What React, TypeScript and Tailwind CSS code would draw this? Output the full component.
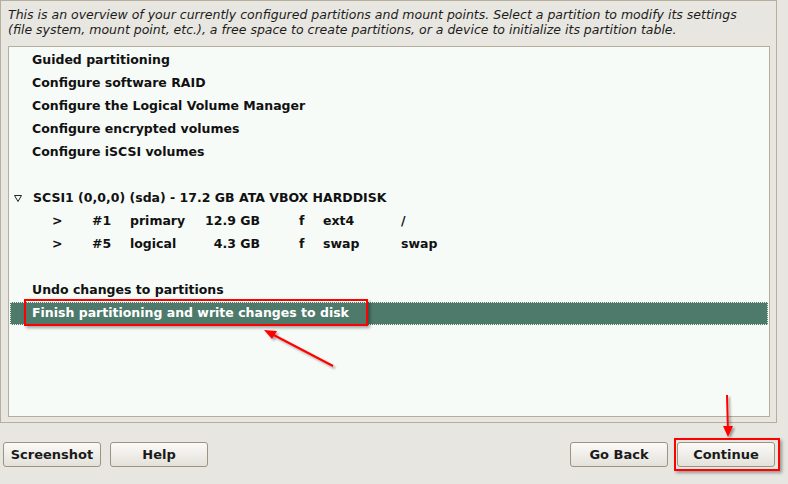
import React from 'react';

// Debian installer style partition overview
const items = [
  'Guided partitioning',
  'Configure software RAID',
  'Configure the Logical Volume Manager',
  'Configure encrypted volumes',
  'Configure iSCSI volumes',
];

const parts = [
  { num: '#1', type: 'primary', size: '12.9 GB', fs: 'ext4', mount: '/' },
  { num: '#5', type: 'logical', size: '4.3 GB', fs: 'swap', mount: 'swap' },
];

function Row({ children, className = '' }: { children: React.ReactNode; className?: string }) {
  return <div className={`h-[23px] flex items-center whitespace-pre ${className}`}>{children}</div>;
}

function Btn({ label, className = '' }: { label: string; className?: string }) {
  return (
    <button
      className={`h-[25px] w-[98px] rounded-[3px] border border-[#9d9381] bg-gradient-to-b from-[#fbfaf8] to-[#e4e1da] text-[13px] font-bold text-[#1a1a1a] ${className}`}
    >
      {label}
    </button>
  );
}

export default function App() {
  return (
    <div
      className="relative w-[788px] h-[484px] overflow-hidden bg-[#e8e6e0] text-[#111]"
      style={{ fontFamily: '"DejaVu Sans", sans-serif' }}
    >
      <div className="w-[777px] h-[423px] border border-[#b7ad9b] flex flex-col">
        <p className="px-[7px] pt-[6px] text-[12.5px] leading-[15px] italic text-[#1c1c1c] whitespace-nowrap">
          This is an overview of your currently configured partitions and mount points. Select a partition to modify its settings
          <br />
          (file system, mount point, etc.), a free space to create partitions, or a device to initialize its partition table.
        </p>
        <div className="ml-[7px] mt-[9px] w-[762px] h-[371px] border border-[#b7ad9b] bg-[#f6fbf8] px-px pt-[2px] text-[12.5px] font-bold">
          {items.map((t) => (
            <Row key={t} className="pl-[22px]">{t}</Row>
          ))}
          <Row>{' '}</Row>
          <Row className="pl-[4px]">
            <svg width="8" height="7" viewBox="0 0 8 7" className="mr-[11px]">
              <path d="M0.5 0.5 L7.5 0.5 L4 6.5 Z" fill="none" stroke="#222" strokeWidth="1" />
            </svg>
            SCSI1 (0,0,0) (sda) - 17.2 GB ATA VBOX HARDDISK
          </Row>
          {parts.map((p) => (
            <Row key={p.num} className="pl-[42px]">
              <span className="w-[40px]">&gt;</span>
              <span className="w-[38px]">{p.num}</span>
              <span className="w-[69px]">{p.type}</span>
              <span className="w-[61px] text-right">{p.size}</span>
              <span className="w-[39px]"></span>
              <span className="w-[24px]">f</span>
              <span className="w-[78px]">{p.fs}</span>
              <span>{p.mount}</span>
            </Row>
          ))}
          <Row>{' '}</Row>
          <Row className="pl-[22px]">Undo changes to partitions</Row>
          <Row className="relative pl-[22px] bg-[#4e7a6c] text-white outline-1 outline-dotted outline-offset-[-1px] outline-[#e8f0ec]">
            Finish partitioning and write changes to disk
            <span className="absolute left-[14px] top-[-3px] w-[344px] h-[27px] border-2 border-[#ff0000] shadow-[2px_2px_3px_rgba(0,0,0,0.35)]" />
          </Row>
        </div>
      </div>

      <div className="flex items-center mt-[19px] px-[3px]">
        <Btn label="Screenshot" />
        <Btn label="Help" className="ml-[9px]" />
        <div className="flex-1" />
        <Btn label="Go Back" className="mr-[9px]" />
        <div className="relative">
          <Btn label="Continue" className="mr-[10px]" />
          <span className="absolute left-[-3px] top-[-4px] w-[106px] h-[33px] border-2 border-[#ff0000] shadow-[2px_2px_3px_rgba(0,0,0,0.35)]" />
        </div>
      </div>

      {/* annotation arrows */}
      <svg className="absolute left-0 top-0 pointer-events-none" width="788" height="484">
        <defs>
          <filter id="sh" x="-20%" y="-20%" width="140%" height="140%">
            <feDropShadow dx="2" dy="2" stdDeviation="1.2" floodColor="#000" floodOpacity="0.35" />
          </filter>
        </defs>
        <g filter="url(#sh)" stroke="#ff0000" strokeWidth="2" fill="#ff0000">
          <line x1="333" y1="366" x2="268" y2="332" />
          <path d="M264 330 L277 331 L272 339 Z" stroke="none" />
          <line x1="727" y1="395" x2="728" y2="432" />
          <path d="M728 437 L723 426 L733 426 Z" stroke="none" />
        </g>
      </svg>
    </div>
  );
}
